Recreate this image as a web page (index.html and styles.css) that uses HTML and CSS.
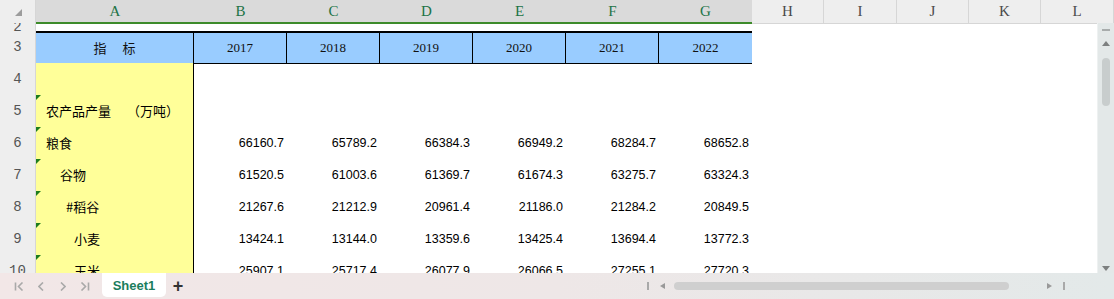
FILE: index.html
```html
<!DOCTYPE html>
<html lang="zh">
<head>
    <meta charset="UTF-8">
    <title>农产品产量</title>
    <link rel="stylesheet" href="styles.css">
</head>
<body>
<div class="app">
    <div class="colhead">
        <div class="corner"><span class="corner-tri"></span></div>
        <div class="ch sel">A</div>
        <div class="ch sel">B</div>
        <div class="ch sel">C</div>
        <div class="ch sel">D</div>
        <div class="ch sel">E</div>
        <div class="ch sel">F</div>
        <div class="ch sel">G</div>
        <div class="ch">H</div>
        <div class="ch">I</div>
        <div class="ch">J</div>
        <div class="ch">K</div>
        <div class="ch">L</div>
    </div>

    <div class="main">
        <div class="sheet">
            <!-- row 2, only its bottom shows -->
            <div class="row r2">
                <div class="rh"><span>2</span></div>
                <div></div><div></div><div></div><div></div><div></div><div></div><div></div>
                <div></div><div></div><div></div><div></div><div></div>
            </div>

            <div class="row">
                <div class="rh">3</div>
                <div class="hd name">指　 标</div>
                <div class="hd">2017</div>
                <div class="hd">2018</div>
                <div class="hd">2019</div>
                <div class="hd">2020</div>
                <div class="hd">2021</div>
                <div class="hd last">2022</div>
                <div></div><div></div><div></div><div></div><div></div>
            </div>

            <div class="row">
                <div class="rh">4</div>
                <div class="ia"></div>
                <div></div><div></div><div></div><div></div><div></div><div></div>
                <div></div><div></div><div></div><div></div><div></div>
            </div>

            <div class="row">
                <div class="rh">5</div>
                <div class="ia mk">农产品产量　 （万吨）</div>
                <div></div><div></div><div></div><div></div><div></div><div></div>
                <div></div><div></div><div></div><div></div><div></div>
            </div>

            <div class="row">
                <div class="rh">6</div>
                <div class="ia mk">粮食</div>
                <div class="n">66160.7</div>
                <div class="n">65789.2</div>
                <div class="n">66384.3</div>
                <div class="n">66949.2</div>
                <div class="n">68284.7</div>
                <div class="n">68652.8</div>
                <div></div><div></div><div></div><div></div><div></div>
            </div>

            <div class="row">
                <div class="rh">7</div>
                <div class="ia mk ind1">谷物</div>
                <div class="n">61520.5</div>
                <div class="n">61003.6</div>
                <div class="n">61369.7</div>
                <div class="n">61674.3</div>
                <div class="n">63275.7</div>
                <div class="n">63324.3</div>
                <div></div><div></div><div></div><div></div><div></div>
            </div>

            <div class="row">
                <div class="rh">8</div>
                <div class="ia mk ind2">#稻谷</div>
                <div class="n">21267.6</div>
                <div class="n">21212.9</div>
                <div class="n">20961.4</div>
                <div class="n">21186.0</div>
                <div class="n">21284.2</div>
                <div class="n">20849.5</div>
                <div></div><div></div><div></div><div></div><div></div>
            </div>

            <div class="row">
                <div class="rh">9</div>
                <div class="ia mk ind3">小麦</div>
                <div class="n">13424.1</div>
                <div class="n">13144.0</div>
                <div class="n">13359.6</div>
                <div class="n">13425.4</div>
                <div class="n">13694.4</div>
                <div class="n">13772.3</div>
                <div></div><div></div><div></div><div></div><div></div>
            </div>

            <div class="row">
                <div class="rh">10</div>
                <div class="ia mk ind3">玉米</div>
                <div class="n">25907.1</div>
                <div class="n">25717.4</div>
                <div class="n">26077.9</div>
                <div class="n">26066.5</div>
                <div class="n">27255.1</div>
                <div class="n">27720.3</div>
                <div></div><div></div><div></div><div></div><div></div>
            </div>
        </div>

        <div class="vscroll">
            <div class="vs-min"></div>
            <div class="tri-up"></div>
            <div class="vs-thumb"></div>
            <div class="tri-down"></div>
        </div>
    </div>

    <div class="tabbar">
        <div class="nav">
            <span class="nav-btn">
                <svg width="10" height="9" viewBox="0 0 10 9"><path d="M1.5 0.5v8M8.5 0.5L4.5 4.5l4 4" fill="none" stroke="#a9a9a9" stroke-width="1.6"/></svg>
            </span>
            <span class="nav-btn">
                <svg width="6" height="9" viewBox="0 0 6 9"><path d="M5 0.5L1 4.5l4 4" fill="none" stroke="#a9a9a9" stroke-width="1.6"/></svg>
            </span>
            <span class="nav-btn">
                <svg width="6" height="9" viewBox="0 0 6 9"><path d="M1 0.5l4 4-4 4" fill="none" stroke="#a9a9a9" stroke-width="1.6"/></svg>
            </span>
            <span class="nav-btn">
                <svg width="10" height="9" viewBox="0 0 10 9"><path d="M1.5 0.5l4 4-4 4M8.5 0.5v8" fill="none" stroke="#a9a9a9" stroke-width="1.6"/></svg>
            </span>
        </div>
        <div class="tab">Sheet1</div>
        <div class="add">+</div>

        <div class="hscroll">
            <span class="hs-bar"></span>
            <span class="tri-left"></span>
            <span class="hs-thumb"></span>
            <span class="tri-right"></span>
            <span class="hs-bar end"></span>
        </div>
    </div>
</div>
</body>
</html>
```

FILE: styles.css
```css
body {
    margin: 0;
    width: 1114px;
    height: 299px;
    overflow: hidden;
    font-family: "Liberation Sans", Arial, sans-serif;
    background: #fff;
}
.app {
    display: flex;
    flex-direction: column;
    height: 299px;
}

/* column headers */
.colhead {
    display: grid;
    grid-template-columns: 36px 158px repeat(6, 93px) 72px 73px 72px 72px 73px;
    height: 23px;
}
.corner {
    box-sizing: border-box;
    background: #eeeeee;
    border-right: 1px solid #d6d6d6;
    border-bottom: 1px solid #d6d6d6;
    padding: 9px 0 0 15px;
}
.corner-tri {
    display: block;
    width: 0;
    height: 0;
    border-left: 7px solid transparent;
    border-bottom: 7px solid #9c9c9c;
}
.ch {
    box-sizing: border-box;
    background: #eeeeee;
    color: #4a4a4a;
    font-family: "Liberation Serif", serif;
    font-size: 15px;
    text-align: center;
    line-height: 23px;
    border-right: 1px solid #d6d6d6;
    border-bottom: 1px solid #d6d6d6;
}
.ch.sel {
    background: #dadada;
    color: #217346;
    border-right: none;
    border-bottom: 2px solid #3d8b2a;
    line-height: 22px;
}

/* grid body */
.main {
    display: flex;
    height: 250px;
}
.sheet {
    width: 1097px;
    overflow: hidden;
}
.row {
    display: grid;
    grid-template-columns: 36px 158px repeat(6, 93px) 72px 73px 72px 72px 56px;
    height: 32px;
}
.row > div {
    box-sizing: border-box;
}
.row.r2 {
    height: 8px;
}
.rh {
    background: #eeeeee;
    border-right: 1px solid #d6d6d6;
    border-bottom: 1px solid #d6d6d6;
    color: #555;
    font-family: "Liberation Mono", monospace;
    font-size: 14px;
    text-align: center;
    line-height: 32px;
}
.r2 .rh {
    line-height: 14px;
}
.r2 .rh span {
    display: block;
    margin-top: -3px;
}
.hd {
    background: #99ccff;
    border-top: 2px solid #000;
    border-bottom: 1px solid #000;
    border-right: 1px solid #000;
    text-align: center;
    line-height: 29px;
    font-family: "Liberation Serif", "Times New Roman", serif;
    font-size: 13px;
    color: #111;
}
.hd.last {
    border-right: none;
}
.hd.name {
    font-family: "Noto Sans CJK SC", sans-serif;
    white-space: pre;
}
.ia {
    position: relative;
    background: #ffff99;
    border-right: 1px solid #000;
    padding-left: 10px;
    font-family: "Noto Sans CJK SC", sans-serif;
    font-size: 13px;
    line-height: 32px;
    white-space: pre;
    color: #000;
}
.ia.ind1 { padding-left: 24px; }
.ia.ind2 { padding-left: 30px; }
.ia.ind3 { padding-left: 38px; }
.mk::before {
    content: "";
    position: absolute;
    left: 0;
    top: 0;
    border-top: 5px solid #1d7c1d;
    border-right: 5px solid transparent;
}
.n {
    text-align: right;
    padding-right: 3px;
    font-size: 12.5px;
    line-height: 32px;
    color: #000;
}

/* vertical scrollbar */
.vscroll {
    width: 17px;
    box-sizing: border-box;
    background: #e3e8e8;
    border-left: 1px solid #eef1f1;
    display: flex;
    flex-direction: column;
    align-items: center;
    padding-top: 6px;
}
.vs-min {
    width: 8px;
    height: 2px;
    background: #a8acac;
}
.tri-up {
    margin-top: 10px;
    width: 0;
    height: 0;
    border-left: 4px solid transparent;
    border-right: 4px solid transparent;
    border-bottom: 5px solid #7d8080;
}
.vs-thumb {
    margin-top: 12px;
    width: 8px;
    height: 48px;
    border-radius: 4px;
    background: #c8cdcd;
}
.tri-down {
    margin-top: auto;
    margin-bottom: 2px;
    width: 0;
    height: 0;
    border-left: 4px solid transparent;
    border-right: 4px solid transparent;
    border-top: 5px solid #7d8080;
}

/* sheet tabs */
.tabbar {
    height: 26px;
    display: flex;
    align-items: center;
    background: linear-gradient(90deg, #f2e7e7 0%, #eee7e7 50%, #e3e9e9 100%);
}
.nav {
    display: flex;
    padding-left: 8px;
}
.nav-btn {
    width: 22px;
    display: flex;
    justify-content: center;
}
.tab {
    align-self: flex-start;
    margin-left: 6px;
    width: 64px;
    height: 24px;
    background: #fff;
    border-radius: 0 0 5px 5px;
    color: #1b7d5c;
    font-weight: bold;
    font-size: 13px;
    text-align: center;
    line-height: 26px;
}
.add {
    width: 20px;
    margin-left: 2px;
    text-align: center;
    font-size: 18px;
    font-weight: bold;
    color: #333;
    line-height: 26px;
}
.hscroll {
    display: flex;
    align-items: center;
    margin-left: 459px;
}
.hs-bar {
    width: 2px;
    height: 8px;
    background: #a9a9a9;
}
.hs-bar.end {
    margin-left: 11px;
}
.tri-left {
    margin-left: 11px;
    width: 0;
    height: 0;
    border-top: 3px solid transparent;
    border-bottom: 3px solid transparent;
    border-right: 5px solid #999;
}
.hs-thumb {
    margin-left: 9px;
    width: 335px;
    height: 8px;
    border-radius: 4px;
    background: #cfcfcf;
}
.tri-right {
    margin-left: 38px;
    width: 0;
    height: 0;
    border-top: 3px solid transparent;
    border-bottom: 3px solid transparent;
    border-left: 5px solid #999;
}
```
